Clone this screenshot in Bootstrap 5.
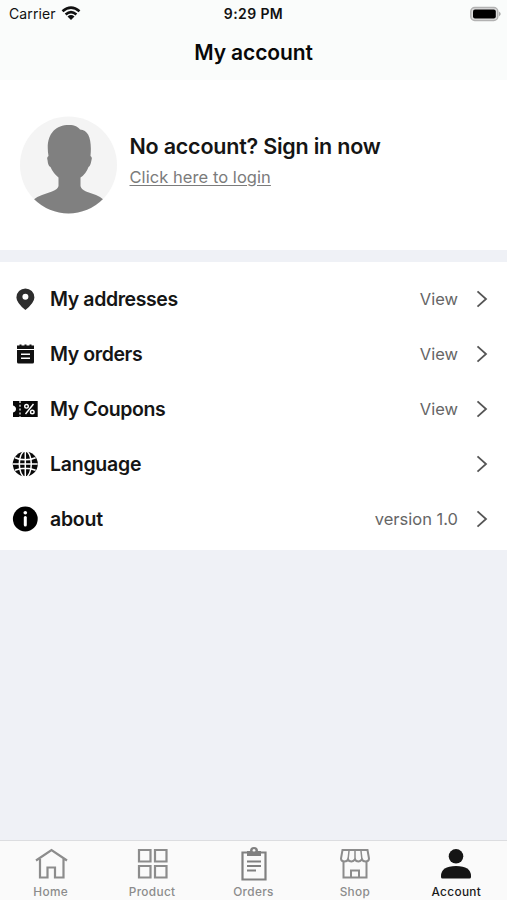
<!DOCTYPE html>
<html lang="en">
<head>
<meta charset="utf-8">
<meta name="viewport" content="width=device-width, initial-scale=1">
<title>My account</title>
<link href="https://cdn.jsdelivr.net/npm/bootstrap@5.3.0/dist/css/bootstrap.min.css" rel="stylesheet">
<style>
body{font-family:Inter,"Liberation Sans",sans-serif;background:#eff1f6;color:#151515;height:900px;overflow:hidden}
svg{display:block;flex:none}
.top-area{height:80px;background:#fafcfb;color:#111}
.status{height:28px;font-size:14px;line-height:28px}
.status>div{flex:1 1 0}
.carrier{letter-spacing:.12px;margin-left:9px}
.wifi{margin-left:5px}
.clock{font-weight:600;font-size:14px;letter-spacing:.4px}
.title{font-size:21px;font-weight:600;line-height:49px;letter-spacing:-.1px;color:#080808}
.profile{height:170px;padding:0 20px 1px}
.intro{margin-left:12.5px;padding-bottom:10px}
.profile h2{font-size:21.5px;font-weight:600;line-height:28px;letter-spacing:-.22px;margin-bottom:6px}
.profile a{display:block;font-size:16.5px;line-height:22px;letter-spacing:.06px;color:#7b7b7b;text-underline-offset:2px}
.options{margin-top:12px;height:287.5px;padding-top:9.5px;border-radius:0}
.options .list-group-item{height:55px;border:0;padding:0 18px 0 12px;background:#fff;color:#151515}
.ico{width:26px}
.label{margin-left:12px;padding-top:2px;font-size:19.5px;font-weight:600;letter-spacing:-.4px}
.label-wide{letter-spacing:-.25px}
.value{font-size:16.5px;color:#666;margin-right:17px}
.tabs{height:60px;background:#fafafa;border-top:1px solid #dcdde0;color:#8c8c8c;font-size:11.8px;font-weight:500}
.tabs .nav-link{padding:5px 0 0;color:inherit;line-height:14px;letter-spacing:.35px}
.tabs .nav-link.active{color:#1a1a1a}
.tabs svg{margin:0 auto 3px}
</style>
</head>
<body class="d-flex flex-column">
<header class="top-area">
  <div class="status d-flex">
    <div class="d-flex align-items-center"><span class="carrier">Carrier</span>
      <svg class="wifi" width="20" height="17" viewBox="0 0 20 17" fill="none" stroke="#111" stroke-width="2.6"><path d="M1.5 5.2Q10-2 18.500 5.200M4.600 8.400Q10 3.800 15.400 8.400"/><path d="M6.500 10.500Q10 7.700 13.500 10.500L10 14z" fill="#111" stroke="none"/></svg></div>
    <div class="clock text-center">9:29 PM</div>
    <div class="d-flex align-items-center justify-content-end"><svg width="37" height="16" viewBox="0 0 37 16"><rect x=".8" y="1.5" width="27" height="13" rx="4" fill="#ddd" stroke="#b2b2b2" stroke-width="1.5"/><rect x="3" y="3.600" width="22.800" height="8.800" rx="2" fill="#000"/><path d="M29 5.600q3.500 2.400 0 4.800z" fill="#aaa"/></svg></div>
  </div>
  <h1 class="title text-center mb-0">My account</h1>
</header>
<section class="profile bg-white d-flex align-items-center">
  <svg width="97" height="98" viewBox="0 0 97 98"><defs><clipPath id="round"><circle cx="48.5" cy="49" r="48.5"/></clipPath></defs><circle cx="48.5" cy="49" r="48.5" fill="#f4f4f4"/><path clip-path="url(#round)" fill="#808080" d="M49 9C55 9 58 11 60 13.500C69 14 72 24 70.500 40Q72.500 41 71.500 44Q70.500 50 68.500 51Q66 58 60.500 61.500V70Q61 73 66 75.500L76 79Q81 81 84 84V99H13V84Q16 81 22 79L32 75.500Q38 73 38.500 70V61.500Q33 57 30.500 51Q28 50 27.500 44Q26.500 41 28.500 40C25 20 34 9 49 9Z"/></svg>
  <div class="intro"><h2>No account? Sign in now</h2><a href="#">Click here to login</a></div>
</section>
<main class="options list-group bg-white">
  <a href="#" class="list-group-item d-flex align-items-center"><svg class="ico" height="26" viewBox="0 0 26 26"><path fill="#2d2d2d" fill-rule="evenodd" d="M13.400 2.400a9 9 0 0 1 9 9Q22.400 16.500 13.400 24Q4.400 16.500 4.400 11.400a9 9 0 0 1 9-9Zm0 5.400a3 3 0 1 0 0 6a3 3 0 1 0 0-6Z"/></svg><span class="label">My addresses</span><span class="value ms-auto">View</span><svg width="14" height="20" viewBox="0 0 14 20" fill="none" stroke="#555" stroke-width="1.800"><path d="M2.500 2.300L11 10L2.500 17.700"/></svg></a>
  <a href="#" class="list-group-item d-flex align-items-center"><svg class="ico" height="26" viewBox="0 0 26 26"><path fill="#111" d="M5 4.500H7.500V3.500H9.500V4.500H12.500V3.500H14.500V4.500H17.500V3.500H19.500V4.500H22V8H5zM5 9H22V21Q22 22.500 20.500 22.500H6.500Q5 22.500 5 21z"/><path stroke="#fff" stroke-width="1.400" d="M9 13.300H18M9 17.300H18"/></svg><span class="label">My orders</span><span class="value ms-auto">View</span><svg width="14" height="20" viewBox="0 0 14 20" fill="none" stroke="#555" stroke-width="1.800"><path d="M2.500 2.300L11 10L2.500 17.700"/></svg></a>
  <a href="#" class="list-group-item d-flex align-items-center"><svg class="ico" height="26" viewBox="0 0 26 26"><path fill="#080808" d="M1 5H25.700V21H1V16.500Q4 15.500 4 13Q4 10.500 1 9.500z"/><path stroke="#fff" stroke-width="1.200" stroke-dasharray="2 1.800" d="M8 5V21"/><g fill="none" stroke="#fff" stroke-width="1.400"><path d="M21.500 8L13.500 18"/><circle cx="14.500" cy="10.300" r="1.800"/><circle cx="20.300" cy="16" r="1.800"/></g></svg><span class="label">My Coupons</span><span class="value ms-auto">View</span><svg width="14" height="20" viewBox="0 0 14 20" fill="none" stroke="#555" stroke-width="1.800"><path d="M2.500 2.300L11 10L2.500 17.700"/></svg></a>
  <a href="#" class="list-group-item d-flex align-items-center"><svg class="ico" height="26" viewBox="0 0 26 26"><circle cx="13.300" cy="13" r="12.500" fill="#080808"/><g fill="none" stroke="#fff" stroke-width="1.500"><path d="M1 13H25.600M13.300 0V26M3 6.700Q13.300 11 23.600 6.700M3 19.300Q13.300 15 23.600 19.300"/><ellipse cx="13.300" cy="13" rx="6" ry="13"/></g></svg><span class="label label-wide">Language</span><svg class="ms-auto" width="14" height="20" viewBox="0 0 14 20" fill="none" stroke="#555" stroke-width="1.800"><path d="M2.500 2.300L11 10L2.500 17.700"/></svg></a>
  <a href="#" class="list-group-item d-flex align-items-center"><svg class="ico" height="26" viewBox="0 0 26 26"><circle cx="13.300" cy="13" r="12.400" fill="#000"/><circle cx="13.300" cy="6.700" r="1.800" fill="#fff"/><rect x="11.800" y="10" width="3" height="10.500" rx="1.500" fill="#fff"/></svg><span class="label label-wide">about</span><span class="value ms-auto">version 1.0</span><svg width="14" height="20" viewBox="0 0 14 20" fill="none" stroke="#555" stroke-width="1.800"><path d="M2.500 2.300L11 10L2.500 17.700"/></svg></a>
</main>
<nav class="tabs nav nav-justified mt-auto flex-nowrap">
  <a href="#" class="nav-item nav-link"><svg width="34" height="36" viewBox="0 0 34 36" fill="none" stroke="#8c8c8c" stroke-width="2.200"><path d="M2 14.500L17.500 4L33 14.500M6 13V31.500H13.500V21.500H21V31.500H29.500V13"/></svg>Home</a>
  <a href="#" class="nav-item nav-link"><svg width="34" height="36" viewBox="0 0 34 36" fill="none" stroke="#8c8c8c" stroke-width="2.200"><path d="M4 4H15.500V15.500H4zM20 4H31.500V15.500H20zM4 20H15.500V31.500H4zM20 20H31.500V31.500H20z"/></svg>Product</a>
  <a href="#" class="nav-item nav-link"><svg width="34" height="36" viewBox="0 0 34 36" fill="none" stroke="#808080" stroke-width="2.200"><path d="M5.500 6.500H28.500V33.500H5.500zM10 15.500H24M10 20H24M10 24.500H19"/><path fill="#808080" stroke="none" fill-rule="evenodd" d="M10 5H13a4 4 0 0 1 8 0H24V10H10zM17 3a1.500 1.500 0 1 0 0 3a1.500 1.500 0 1 0 0-3z"/></svg>Orders</a>
  <a href="#" class="nav-item nav-link"><svg width="34" height="36" viewBox="0 0 34 36" fill="none" stroke="#8c8c8c" stroke-width="2"><path d="M4.500 4H29.500L31 12.500Q31 15.500 27.500 15.500Q25 15.500 24 13.500Q22 15.500 20.500 15.500Q18 15.500 17 13.500Q15 15.500 13.500 15.500Q11 15.500 10 13.500Q9 15.500 6.500 15.500Q3 15.500 3 12.500zM5.500 16V31.500H28.500V16M13 31.500V24.500H21V31.500"/><path stroke-width="1.500" d="M11 5L10 14M17 5V14M23 5L24 14"/></svg>Shop</a>
  <a href="#" class="nav-item nav-link active"><svg width="34" height="36" viewBox="0 0 34 36" fill="#151515"><circle cx="17" cy="10.300" r="7.300"/><path d="M2 30Q2 20 17 20Q32 20 32 30V31Q32 32.500 30.500 32.500H3.500Q2 32.500 2 31z"/></svg>Account</a>
</nav>
<script src="https://cdn.jsdelivr.net/npm/bootstrap@5.3.0/dist/js/bootstrap.bundle.min.js"></script>
</body>
</html>
